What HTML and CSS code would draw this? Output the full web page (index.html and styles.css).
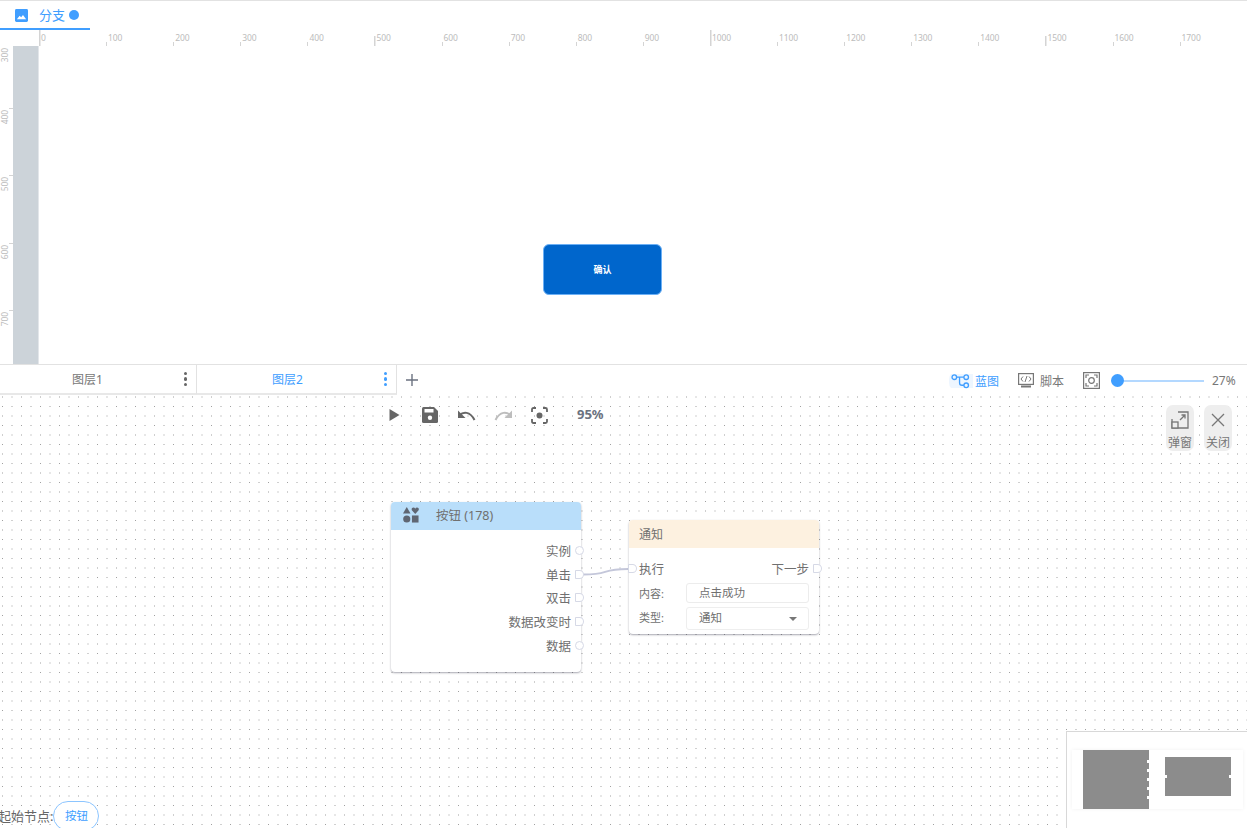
FILE: index.html
```html
<!DOCTYPE html>
<html lang="zh">
<head>
<meta charset="utf-8">
<title>分支</title>
<link rel="stylesheet" href="styles.css">
</head>
<body>
<div class="app">
  <header class="tabbar">
    <div class="tab">
      <svg class="tab-icon" viewBox="0 0 14 14"><rect width="14" height="14" rx="1.5" fill="#409eff"/><path d="M2 11 L5 7.2 L6.6 9 L8.6 6.4 L12 11 Z" fill="#fff"/></svg>
      <span class="tab-name">分支</span>
      <span class="tab-dot"></span>
    </div>
  </header>

  <div class="ruler-h">
    <div class="rh-cell rh-long">0</div><div class="rh-cell">100</div><div class="rh-cell">200</div><div class="rh-cell">300</div><div class="rh-cell">400</div><div class="rh-cell rh-mid">500</div><div class="rh-cell">600</div><div class="rh-cell">700</div><div class="rh-cell">800</div><div class="rh-cell">900</div><div class="rh-cell rh-long">1000</div><div class="rh-cell">1100</div><div class="rh-cell">1200</div><div class="rh-cell">1300</div><div class="rh-cell">1400</div><div class="rh-cell rh-mid">1500</div><div class="rh-cell">1600</div><div class="rh-cell">1700</div>
  </div>

  <main class="stage">
    <div class="ruler-v">
      <div class="rv-cell"><span>300</span></div>
      <div class="rv-cell"><span>400</span></div>
      <div class="rv-cell"><span>500</span></div>
      <div class="rv-cell"><span>600</span></div>
      <div class="rv-cell"><span>700</span></div>
    </div>
    <div class="strip"></div>
    <div class="artboard">
      <button class="confirm">确认</button>
    </div>
  </main>

  <nav class="layerbar">
    <div class="layer">
      <span class="layer-name">图层1</span>
      <span class="kebab"><i></i><i></i><i></i></span>
    </div>
    <div class="layer layer-active">
      <span class="layer-name">图层2</span>
      <span class="kebab"><i></i><i></i><i></i></span>
    </div>
    <svg class="plus" viewBox="0 0 12 12"><path d="M6 0V12M0 6H12" stroke="#6b7280" stroke-width="1.4" fill="none"/></svg>
    <div class="layer-tools">
      <div class="mode mode-active">
        <svg class="mode-icon" viewBox="0 0 20 16"><circle cx="3.5" cy="4" r="2.4" fill="none" stroke="#409eff" stroke-width="1.4"/><circle cx="16" cy="4" r="2.4" fill="none" stroke="#409eff" stroke-width="1.4"/><circle cx="16" cy="12.5" r="2.4" fill="none" stroke="#409eff" stroke-width="1.4"/><path d="M6 4H9V10Q9 12.5 11.5 12.5H13.6M9 4H13.6" fill="none" stroke="#409eff" stroke-width="1.4"/></svg>
        <span>蓝图</span>
      </div>
      <div class="mode mode-script">
        <svg class="script-icon" viewBox="0 0 16 15"><rect x=".6" y=".6" width="14.8" height="10.8" fill="none" stroke="#777" stroke-width="1.2"/><path d="M5 3.5 3 6 5 8.500M11 3.500 13 6 11 8.500M9 3 7 9" fill="none" stroke="#777" stroke-width="1"/><path d="M3 13.500H13" stroke="#777" stroke-width="2"/></svg>
        <span>脚本</span>
      </div>
      <svg class="fit-icon" viewBox="0 0 17 17"><rect x=".6" y=".6" width="15.800" height="15.800" fill="none" stroke="#777" stroke-width="1.200"/><circle cx="8.500" cy="8.500" r="2.800" fill="none" stroke="#777" stroke-width="1.200"/><path d="M3 6V3H6M11 3H14V6M14 11V14H11M6 14H3V11" fill="none" stroke="#777" stroke-width="1.200"/></svg>
      <div class="slider"><span class="thumb"></span></div>
      <span class="pct">27%</span>
    </div>
  </nav>

  <section class="blueprint">
    <div class="bp-tools">
      <svg class="t-play" viewBox="0 0 11 12"><path d="M.5 0 10.500 6 .5 12Z" fill="#666"/></svg>
      <svg class="t-save" viewBox="0 0 16 16"><path d="M1.500 0H12L16 4V14.500Q16 16 14.500 16H1.500Q0 16 0 14.500V1.500Q0 0 1.500 0Z" fill="#666"/><rect x="2.500" y="2" width="9" height="3.500" fill="#fff"/><circle cx="8" cy="10.800" r="2.200" fill="#fff"/></svg>
      <svg class="t-undo" viewBox="0 0 18 11"><path d="M1.500 5.500C5 1.500 12 1 16.500 10" fill="none" stroke="#666" stroke-width="2"/><path d="M0 .5V8H7.500Z" fill="#666"/></svg>
      <svg class="t-redo" viewBox="0 0 18 11"><path d="M16.500 5.500C13 1.500 6 1 1.500 10" fill="none" stroke="#bdbdbd" stroke-width="2"/><path d="M18 .5V8H10.500Z" fill="#bdbdbd"/></svg>
      <svg class="t-fit" viewBox="0 0 17 17"><path d="M1 5V2.500Q1 1 2.500 1H5M12 1H14.500Q16 1 16 2.500V5M16 12V14.500Q16 16 14.500 16H12M5 16H2.500Q1 16 1 14.500V12" fill="none" stroke="#666" stroke-width="1.800"/><circle cx="8.500" cy="8.500" r="3" fill="#666"/></svg>
      <span class="zoom-val">95%</span>
    </div>

    <div class="side-actions">
      <div class="side-btn">
        <svg class="side-icon" viewBox="0 0 18 18"><path d="M7 1H17V17H1V8" fill="none" stroke="#777" stroke-width="1.300"/><rect x="1" y="11" width="6" height="6" fill="#eee" stroke="#777" stroke-width="1.300"/><path d="M9 9 14 4M10.500 4H14V7.500" fill="none" stroke="#777" stroke-width="1.300"/></svg>
        <span>弹窗</span>
      </div>
      <div class="side-btn">
        <svg class="side-icon" viewBox="0 0 18 18"><path d="M3 3 15 15M15 3 3 15" fill="none" stroke="#777" stroke-width="1.300"/></svg>
        <span>关闭</span>
      </div>
    </div>

    <svg class="wire" viewBox="0 0 50 10"><path d="M0 8.500C30 9 18 3 47 3" fill="none" stroke="#c4c7da" stroke-width="2"/></svg>

    <article class="node node-button">
      <div class="node-head head-blue">
        <svg class="shapes" viewBox="0 0 17 17"><path d="M4 0 8 6.800H0Z" fill="#5f6673"/><circle cx="4" cy="12.700" r="3.800" fill="#5f6673"/><rect x="9.500" y="9" width="7" height="7.500" fill="#5f6673"/><path d="M13 7.500 9.400 3.500Q8.500 .5 11 .5 12.500 .5 13 1.800 13.500 .5 15 .5 17.500 .5 16.600 3.500Z" fill="#5f6673"/></svg>
        <span class="head-title">按钮 (178)</span>
      </div>
      <div class="ports">
        <div class="port-row">实例<span class="port round"></span></div>
        <div class="port-row">单击<span class="port arrow"></span></div>
        <div class="port-row">双击<span class="port arrow"></span></div>
        <div class="port-row">数据改变时<span class="port arrow"></span></div>
        <div class="port-row">数据<span class="port round"></span></div>
      </div>
    </article>

    <article class="node node-notify">
      <div class="node-head head-orange"><span>通知</span></div>
      <div class="exec-row">
        <span class="port arrow port-in"></span>
        <span>执行</span>
        <span class="next">下一步</span>
        <span class="port arrow"></span>
      </div>
      <div class="field">
        <label>内容:</label>
        <div class="input">点击成功</div>
      </div>
      <div class="field field-select">
        <label>类型:</label>
        <div class="input select">通知<i class="caret"></i></div>
      </div>
    </article>

    <aside class="minimap">
      <div class="mini-panel">
        <div class="mini-a">
          <i class="mp"></i><i class="mp"></i><i class="mp"></i><i class="mp"></i><i class="mp"></i>
        </div>
        <div class="mini-b"><i class="mp"></i><i class="mp"></i></div>
      </div>
    </aside>

    <div class="start">
      <span class="start-label">起始节点:</span>
      <span class="start-pill">按钮</span>
    </div>
  </section>
</div>
</body>
</html>
```
FILE: styles.css
```css
* { box-sizing: border-box; }
html, body { margin: 0; height: 100%; overflow: hidden; background: #fff; }
body { font-family: "Noto Sans", "Noto Sans CJK SC", sans-serif; color: #666; }
.app { display: flex; flex-direction: column; height: 828px; width: 1247px; overflow: hidden; }

.tabbar { height: 30px; border-top: 1px solid #e2e2e2; flex: none; }
.tab { width: 90px; height: 29px; border-bottom: 2px solid #409eff; display: flex; align-items: center; padding: 1px 0 0 15px; color: #409eff; font-size: 13px; }
.tab-icon { width: 13px; height: 13px; }
.tab-name { margin-left: 11px; line-height: 16px; }
.tab-dot { width: 10px; height: 10px; border-radius: 50%; background: #409eff; margin-left: 4px; }

.ruler-h { height: 16px; flex: none; display: flex; padding-left: 39px; overflow: hidden; }
.rh-cell { flex: none; width: 67.1px; height: 16px; font-size: 8.500px; line-height: 15px; color: #bcbcbc; padding-left: 2px; background: linear-gradient(#d4d4d4, #d4d4d4) left bottom / 1px 4px no-repeat; letter-spacing: -0.1px; }
.rh-long { background-size: 1.500px 16px; }
.rh-mid { background-size: 1.500px 10px; }

.stage { height: 318px; flex: none; display: flex; }
.ruler-v { width: 13px; flex: none; overflow: hidden; display: flex; flex-direction: column; }
.rv-cell { flex: none; height: 67.200px; background: linear-gradient(#d4d4d4, #d4d4d4) right top / 4px 1px no-repeat; padding-top: 2px; }
.rv-cell:first-child { margin-top: -5px; padding-top: 7px; background: none; }
.rv-cell span { display: block; writing-mode: vertical-rl; transform: rotate(180deg); font-size: 8.500px; line-height: 9px; width: 9px; color: #bcbcbc; letter-spacing: -0.1px; }
.strip { width: 26px; flex: none; background: #ccd3d9; border-right: 1px solid #e3e6ea; }
.artboard { flex: 1; position: relative; }
.confirm { position: absolute; left: 504px; top: 198px; width: 119px; height: 51px; background: #0066cc; border: 1px solid #6cb0f5; border-radius: 6px; color: #fff; font: 700 9px "Noto Sans CJK SC", sans-serif; padding: 0; }

.layerbar { height: 31px; flex: none; border-top: 1px solid #e2e2e2; display: flex; align-items: stretch; }
.layer { flex: none; width: 197px; height: 30px; border-right: 1px solid #e2e2e2; border-bottom: 2px solid #e8e8e8; display: flex; align-items: center; padding: 2px 0 0 72px; font-size: 12px; color: #777; position: relative; }
.layer + .layer { width: 200px; padding-left: 75px; }
.layer-active { color: #409eff; }
.layer-name { line-height: 16px; }
.kebab { display: flex; flex-direction: column; gap: 2px; margin-left: auto; margin-right: 9px; margin-top: -2px; }
.kebab i { width: 3.500px; height: 3.500px; border-radius: 50%; background: #666; display: block; }
.layer-active .kebab i { background: #409eff; }
.plus { width: 12px; height: 12px; margin: 9px 0 0 9px; flex: none; }
.layer-tools { margin-left: auto; display: flex; align-items: center; height: 30px; padding: 1px 10px 0 0; font-size: 12px; color: #777; }
.mode { display: flex; align-items: center; }
.mode-active { color: #409eff; background: linear-gradient(#eef6ff, #eef6ff) left center / 24px 14px no-repeat; border-radius: 7px; padding-left: 2px; }
.mode-icon { width: 19px; height: 16px; }
.mode-active span { margin-left: 5px; }
.mode-script { margin-left: 19px; }
.script-icon { width: 16px; height: 15px; }
.mode-script span { margin-left: 6px; }
.fit-icon { width: 17px; height: 17px; margin-left: 19px; }
.slider { width: 93px; height: 2px; background: #b3d8ff; margin-left: 11px; position: relative; }
.thumb { position: absolute; left: 0; top: -5.500px; width: 13px; height: 13px; border-radius: 50%; background: #409eff; }
.pct { margin-left: 8px; width: 25px; white-space: nowrap; }

.blueprint { flex: 1; position: relative; background-color: #fff; background-image: url("data:image/svg+xml,%3Csvg xmlns='http://www.w3.org/2000/svg' width='19' height='19'%3E%3Cg fill='%23a0a0a0'%3E%3Crect x='11.5' y='1.5' width='1' height='1'/%3E%3Crect x='2' y='1.5' width='1' height='1'/%3E%3Crect x='11.5' y='11' width='1' height='1'/%3E%3Crect x='2' y='11' width='1' height='1'/%3E%3C/g%3E%3C/svg%3E"); background-size: 19px 19px; overflow: hidden; }
.bp-tools { position: absolute; left: 389px; top: 12px; display: flex; align-items: center; height: 16px; }
.t-play { width: 11px; height: 12px; }
.t-save { width: 16px; height: 16px; margin-left: 22px; }
.t-undo { width: 18px; height: 11px; margin-left: 20px; }
.t-redo { width: 18px; height: 11px; margin-left: 18px; }
.t-fit { width: 17px; height: 17px; margin-left: 19px; }
.zoom-val { margin-left: 29px; font-size: 13px; font-weight: 700; color: #6b7280; line-height: 16px; margin-top: -2px; }

.side-actions { position: absolute; left: 1166px; top: 10px; display: flex; gap: 10px; }
.side-btn { width: 28px; height: 46px; background: #eeeeee; border-radius: 7px; display: flex; flex-direction: column; align-items: center; padding-top: 6px; font-size: 12px; color: #777; }
.side-icon { width: 18px; height: 18px; }
.side-btn span { line-height: 14px; margin-top: 7px; white-space: nowrap; }

.wire { position: absolute; left: 581px; top: 171px; width: 50px; height: 10px; }

.node { position: absolute; width: 190px; background: #fff; border-radius: 4px; box-shadow: 0 1px 2px rgba(60,60,80,.45); font-size: 12.500px; color: #707070; }
.node-button { left: 391px; top: 107px; height: 170px; }
.node-notify { left: 629px; top: 125px; height: 114px; }
.node-head { height: 28px; border-radius: 4px 4px 0 0; display: flex; align-items: center; }
.head-blue { background: #b9defa; padding: 0 0 2px 12px; }
.head-orange { background: #fdf1e0; padding-left: 10px; font-size: 12px; }
.shapes { width: 16px; height: 16px; }
.head-title { margin: -1px 0 0 17px; font-size: 12.500px; }
.ports { padding-top: 8.500px; }
.port-row { height: 23.700px; display: flex; align-items: center; justify-content: flex-end; padding-right: 10px; position: relative; }
.port { position: absolute; right: -3px; top: 50%; width: 9px; height: 9px; margin-top: -4.500px; border: 1.300px solid #d6d9e6; background: #fff; }
.round { border-radius: 50%; }
.arrow { border-radius: 1px 5px 5px 1px; }
.exec-row { height: 24px; margin-top: 8px; display: flex; align-items: center; padding: 0 10px; position: relative; }
.next { margin-left: auto; }
.exec-row .port { right: -3px; }
.exec-row .port-in { right: auto; left: -1px; }
.field { display: flex; align-items: center; height: 20px; padding: 0 10px; font-size: 11px; margin-top: 3px; }
.field-select { margin-top: 4px; height: 23px; }
.field-select label { margin-top: -3px; }
.field label { width: 47px; flex: none; }
.input { flex: 1; height: 20px; border: 1px solid #ececec; border-radius: 3px; padding-left: 12px; line-height: 18px; background: #fff; font-size: 11.500px; }
.select { height: 23px; line-height: 19px; position: relative; border-color: #eee; }
.caret { position: absolute; right: 11px; top: 9px; width: 0; height: 0; border: 4px solid transparent; border-top-color: #777; border-bottom-width: 0; }

.minimap { position: absolute; left: 1066px; top: 336px; width: 181px; height: 97px; border-top: 1px solid #d8d8d8; border-left: 1px solid #d8d8d8; background: #fff; padding: 18px 0 0 5px; }
.mini-panel { width: 171px; height: 59px; box-shadow: 0 0 4px rgba(0,0,0,.06); display: flex; padding-left: 11px; background: #fff; }
.mini-a { width: 66px; height: 59px; background: #8c8c8c; position: relative; display: flex; flex-direction: column; align-items: flex-end; justify-content: center; gap: 6px; }
.mini-b { width: 66px; height: 39px; background: #8c8c8c; margin: 7px 0 0 16px; display: flex; justify-content: space-between; align-items: center; }
.mp { display: block; width: 3px; height: 3px; background: #fff; }
.mini-b .mp { margin: 0 -1px; }
.mini-a .mp { margin-right: -1px; }

.start { position: absolute; left: -2px; top: 406px; display: flex; align-items: center; font-size: 13px; }
.start-label { white-space: nowrap; line-height: 30px; }
.start-pill { flex: none; width: 46px; height: 30px; border: 1px solid #8cc5ff; border-radius: 20px; background: #fff; color: #409eff; font-size: 11.500px; line-height: 28px; text-align: center; }
```
